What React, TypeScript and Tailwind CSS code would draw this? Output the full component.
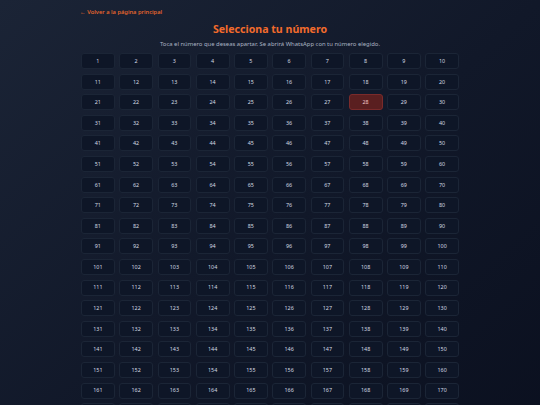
import React from "react";

const numbers = Array.from({ length: 200 }, (_, i) => i + 1);
const taken = [28];

export default function App() {
  return (
    <div
      className="min-h-screen bg-gradient-to-br from-[#1b2436] via-[#111829] to-[#0a0f1e] text-slate-300"
      style={{ fontFamily: '"Noto Sans", "Open Sans", sans-serif' }}
    >
      <div className="w-[380px] mx-auto pt-[8px] pb-6">
        <a href="#" className="block text-[5.8px] leading-[8px] font-medium text-[#f26b2c]">
          ← Volver a la página principal
        </a>

        <h1 className="mt-[6px] text-center text-[10.6px] leading-[14px] font-bold text-[#f26b2c]">
          Selecciona tu número
        </h1>
        <p className="mt-[4px] text-center text-[5.9px] leading-[8px] text-[#aab4c3]">
          Toca el número que deseas apartar. Se abrirá WhatsApp con tu número elegido.
        </p>

        <div className="mt-[5px] grid grid-cols-10 gap-x-[4.5px] gap-y-[4.6px] px-[1px]">
          {numbers.map((n) => {
            const isTaken = taken.includes(n);
            return (
              <button
                key={n}
                className={
                  isTaken
                    ? "h-[16px] rounded-[3px] border border-[#7a2b2b] bg-[#5a1f20] text-[5.4px] text-[#f3c6c6] flex items-center justify-center"
                    : "h-[16px] rounded-[3px] border border-[#1b2536] bg-[#0e1627] text-[5.4px] text-[#d4dae3] flex items-center justify-center"
                }
              >
                {n}
              </button>
            );
          })}
        </div>
      </div>
    </div>
  );
}
